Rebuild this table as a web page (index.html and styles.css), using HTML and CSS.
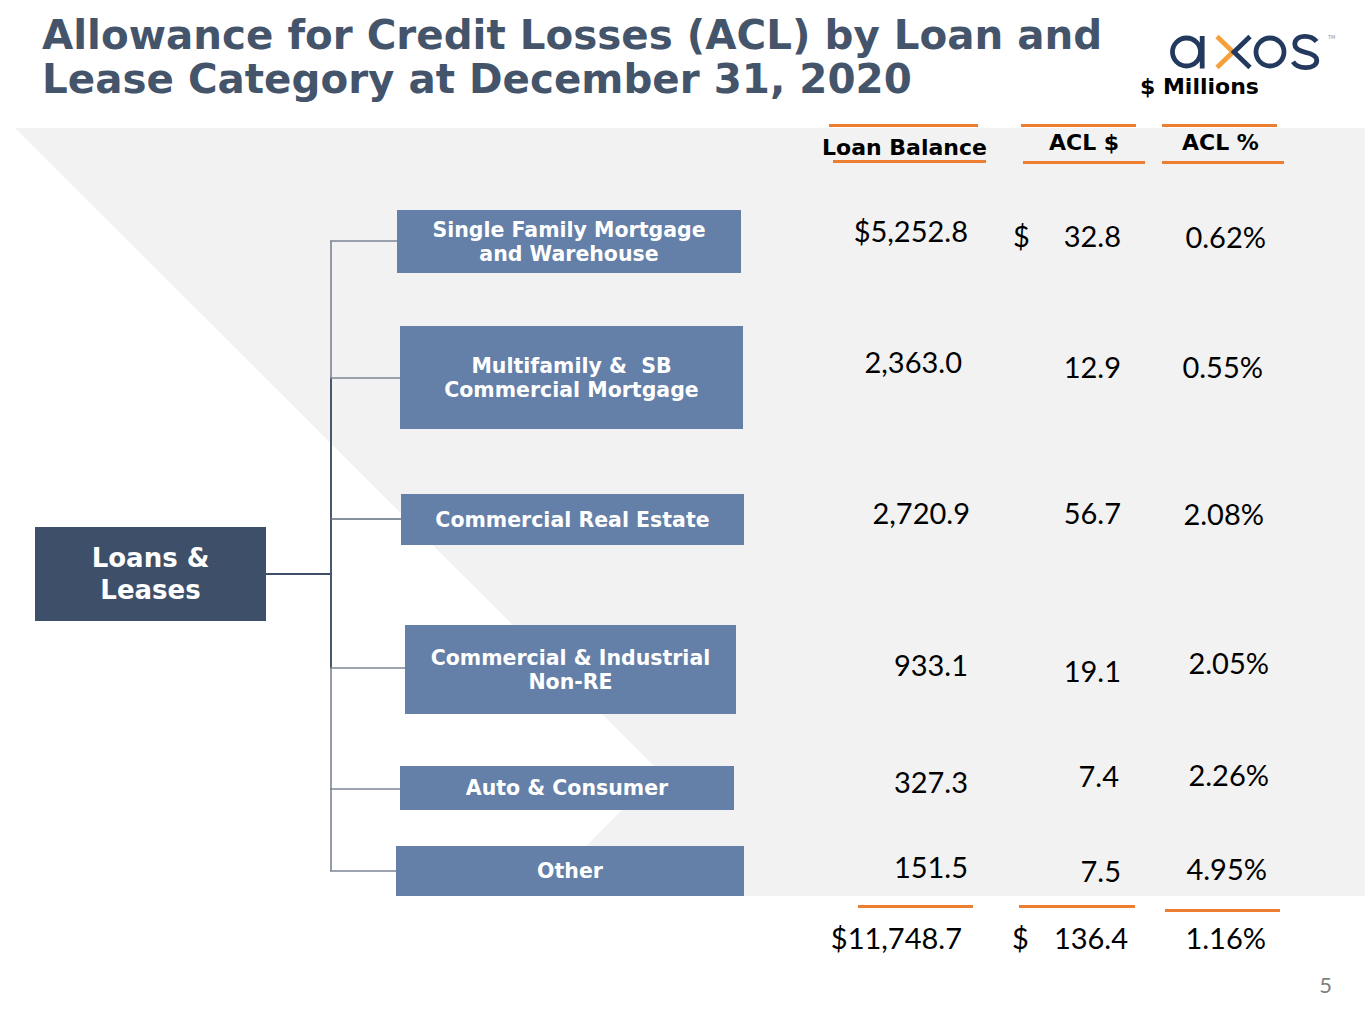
FILE: index.html
```html
<!DOCTYPE html>
<html lang="en">
<head>
<meta charset="utf-8">
<title>Allowance for Credit Losses</title>
<link rel="stylesheet" href="styles.css">
</head>
<body>
<div class="slide">
  <header class="top">
    <h1 class="title">Allowance for Credit Losses (ACL) by Loan and<br>Lease Category at December 31, 2020</h1>
    <div class="brand">
      <svg class="logo" width="178" height="46" viewBox="0 0 178 46" aria-label="axos">
        <g fill="none" stroke-width="4.8">
          <circle cx="18.5" cy="24" r="14" stroke="#233A5E"/>
          <line x1="34.2" y1="8" x2="34.2" y2="40.5" stroke="#233A5E"/>
          <polyline points="49,8.5 65,24 49,39.5" stroke="#F4A13A"/>
          <polyline points="82,8.5 66,24 82,39.5" stroke="#233A5E"/>
          <circle cx="102" cy="24" r="14" stroke="#233A5E"/>
          <path d="M148.5,13.5 C145.5,9.5 141,8.3 137,8.3 C130.5,8.3 126.8,11.8 126.8,16.3 C126.8,21.3 131.5,23 137.5,24.3 C144,25.7 148.8,28 148.8,32.3 C148.8,37 144,39.7 137.5,39.7 C132,39.7 127.5,37.7 125,33.8" stroke="#233A5E"/>
        </g>
        <text x="160" y="11" class="tm">TM</text>
      </svg>
      <div class="units">$ Millions</div>
    </div>
  </header>

  <main class="stage">
    <section class="diagram">
      <svg class="wires" width="800" height="778" viewBox="0 0 800 778">
        <g fill="none">
          <line x1="266" y1="456" x2="332" y2="456" stroke="#3E5069" stroke-width="2"/>
          <line x1="331" y1="123" x2="331" y2="260" stroke="#7C8594" stroke-width="1.6"/>
          <line x1="331" y1="260" x2="331" y2="550" stroke="#4A586C" stroke-width="2"/>
          <line x1="331" y1="550" x2="331" y2="753" stroke="#7C8594" stroke-width="1.6"/>
          <line x1="330" y1="123" x2="397" y2="123" stroke="#7C8594" stroke-width="1.6"/>
          <line x1="330" y1="260" x2="400" y2="260" stroke="#7C8594" stroke-width="1.6"/>
          <line x1="330" y1="401" x2="401" y2="401" stroke="#5F6B7D" stroke-width="1.6"/>
          <line x1="330" y1="550" x2="405" y2="550" stroke="#7C8594" stroke-width="1.6"/>
          <line x1="330" y1="671" x2="400" y2="671" stroke="#7C8594" stroke-width="1.6"/>
          <line x1="330" y1="753" x2="396" y2="753" stroke="#7C8594" stroke-width="1.6"/>
        </g>
      </svg>
      <div class="node root">Loans &amp;<br>Leases</div>
      <div class="node cat n1">Single Family Mortgage<br>and Warehouse</div>
      <div class="node cat n2">Multifamily &amp;&nbsp; SB<br>Commercial Mortgage</div>
      <div class="node cat n3">Commercial Real Estate</div>
      <div class="node cat n4">Commercial &amp; Industrial<br>Non-RE</div>
      <div class="node cat n5">Auto &amp; Consumer</div>
      <div class="node cat n6">Other</div>
    </section>

    <section class="figures">
      <div class="frow hdr">
        <div class="hcell">
          <div class="rule r-lb-top"></div>
          <div class="hlabel l-lb">Loan Balance</div>
          <div class="rule r-lb-bot"></div>
        </div>
        <div class="hcell">
          <div class="rule r-acl-top"></div>
          <div class="hlabel l-acl">ACL $</div>
          <div class="rule r-acl-bot"></div>
        </div>
        <div class="hcell">
          <div class="rule r-pct-top"></div>
          <div class="hlabel l-pct">ACL %</div>
          <div class="rule r-pct-bot"></div>
        </div>
      </div>

      <div class="frow data row1">
        <div class="fc c1">$5,252.8</div>
        <div class="fc c2 dn5"><span class="cur">$</span><span>32.8</span></div>
        <div class="fc c3 dn6">0.62%</div>
      </div>
      <div class="frow data row2">
        <div class="fc c1 in6">2,363.0</div>
        <div class="fc c2 dn5"><span>12.9</span></div>
        <div class="fc c3 dn5 in3">0.55%</div>
      </div>
      <div class="frow data row3">
        <div class="fc c1 out2">2,720.9</div>
        <div class="fc c2"><span>56.7</span></div>
        <div class="fc c3 dn1 in2">2.08%</div>
      </div>
      <div class="frow data row4">
        <div class="fc c1">933.1</div>
        <div class="fc c2 dn6"><span>19.1</span></div>
        <div class="fc c3 up2 out3">2.05%</div>
      </div>
      <div class="frow data row5">
        <div class="fc c1">327.3</div>
        <div class="fc c2 up6 in2"><span>7.4</span></div>
        <div class="fc c3 up7 out3">2.26%</div>
      </div>
      <div class="frow data row6">
        <div class="fc c1">151.5</div>
        <div class="fc c2 dn4"><span>7.5</span></div>
        <div class="fc c3 dn2 out1">4.95%</div>
      </div>
      <div class="frow total">
        <div class="tcell">
          <div class="rule r-t1"></div>
          <div class="fc c1 in6 t-text">$11,748.7</div>
        </div>
        <div class="tcell">
          <div class="rule r-t2"></div>
          <div class="fc c2 c2-total t-text"><span class="cur">$</span><span>136.4</span></div>
        </div>
        <div class="tcell">
          <div class="rule r-t3"></div>
          <div class="fc c3 t-text3">1.16%</div>
        </div>
      </div>
    </section>
  </main>

  <footer class="pageno">5</footer>
</div>
</body>
</html>
```

FILE: styles.css
```css
* { box-sizing: border-box; }

html, body {
  margin: 0;
  padding: 0;
  background: #ffffff;
}

body {
  font-family: "DejaVu Sans", Verdana, sans-serif;
}

.slide {
  position: relative;
  z-index: 0;
  width: 1365px;
  height: 1024px;
  overflow: hidden;
  background: #ffffff;
}

/* grey chevron backdrop */
.slide::before {
  content: "";
  position: absolute;
  z-index: -1;
  left: 0;
  top: 128px;
  width: 1365px;
  height: 768px;
  background: #F2F2F2;
  clip-path: polygon(15px 0, 1365px 0, 1365px 768px, 536px 768px, 660px 644px);
}

/* ---------- header ---------- */
.top {
  display: flex;
  height: 118px;
}

.title {
  margin: 0;
  padding: 13px 0 0 42px;
  font-family: "DejaVu Sans", Verdana, sans-serif;
  font-weight: bold;
  font-size: 40.4px;
  line-height: 44px;
  color: #44546A;
  white-space: nowrap;
}

.brand {
  margin-left: auto;
  width: 225px;
  padding-top: 28px;
  display: flex;
  flex-direction: column;
  align-items: flex-start;
}

.logo {
  display: block;
  margin-left: 28px;
}

.tm {
  font-family: "DejaVu Sans", sans-serif;
  font-size: 5px;
  fill: #8A8F99;
}

.units {
  margin-top: 1px;
  font-weight: bold;
  font-size: 22px;
  line-height: 24px;
  color: #000000;
  white-space: nowrap;
}

/* ---------- stage ---------- */
.stage {
  display: flex;
  height: 850px;
}

.diagram {
  position: relative;
  flex: 0 0 800px;
  height: 778px;
}

.wires {
  position: absolute;
  left: 0;
  top: 0;
}

.node {
  position: absolute;
  display: flex;
  align-items: center;
  justify-content: center;
  text-align: center;
  color: #ffffff;
  font-weight: bold;
  white-space: nowrap;
}

.root {
  left: 35px;
  top: 409px;
  width: 231px;
  height: 94px;
  background: #3E5069;
  font-size: 26px;
  line-height: 32px;
}

.cat {
  background: #6480A8;
  font-size: 20.5px;
  line-height: 24px;
}

.n1 { left: 397px; top: 92px;  width: 344px; height: 63px; }
.n2 { left: 400px; top: 208px; width: 343px; height: 103px; }
.n3 { left: 401px; top: 376px; width: 343px; height: 51px; }
.n4 { left: 405px; top: 507px; width: 331px; height: 89px; }
.n5 { left: 400px; top: 648px; width: 334px; height: 44px; }
.n6 { left: 396px; top: 728px; width: 348px; height: 50px; }

/* ---------- figures ---------- */
.figures {
  flex: 0 0 490px;
  display: flex;
  flex-direction: column;
}

.frow {
  display: grid;
  grid-template-columns: 190px 160px 140px;
  align-items: start;
}

.rule {
  height: 3px;
  background: #ED7D31;
}

.hlabel {
  font-family: "DejaVu Sans", Verdana, sans-serif;
  font-weight: bold;
  font-size: 22px;
  line-height: 20px;
  color: #000000;
  white-space: nowrap;
}

.r-lb-top  { margin: 6px 0 0 29px; width: 149px; }
.l-lb      { margin: 11px 0 0 22px; }
.r-lb-bot  { margin: 2px 0 0 33px; width: 153px; }

.r-acl-top { margin: 6px 0 0 31px; width: 115px; }
.l-acl     { margin: 6px 0 0 59px; }
.r-acl-bot { margin: 8px 0 0 33px; width: 122px; }

.r-pct-top { margin: 6px 0 0 12px; width: 115px; }
.l-pct     { margin: 6px 0 0 32px; }
.r-pct-bot { margin: 8px 0 0 12px; width: 122px; }

.fc {
  font-family: Lato, "Open Sans", sans-serif;
  font-size: 29px;
  line-height: 30px;
  color: #000000;
  white-space: nowrap;
}

.c1 { text-align: right; padding-right: 22px; }
.c2 { display: flex; justify-content: flex-end; padding: 0 29px 0 23px; }
.c3 { text-align: right; padding-right: 24px; }
.cur { margin-right: auto; }

.row1 { margin-top: 52px; height: 131px; }
.row2 { height: 151px; }
.row3 { height: 152px; }
.row4 { height: 117px; }
.row5 { height: 85px; }
.row6 { height: 53px; }

/* small vertical nudges, as on the slide */
.dn1 { margin-top: 1px; }
.dn2 { margin-top: 2px; }
.dn4 { margin-top: 4px; }
.dn5 { margin-top: 5px; }
.dn6 { margin-top: 6px; }
.up2 { margin-top: -2px; }
.up6 { margin-top: -6px; }
.up7 { margin-top: -7px; }

/* small horizontal nudges */
.c1.in6  { padding-right: 28px; }
.c1.out2 { padding-right: 20px; }
.c2.in2  { padding-right: 31px; }
.c3.in3  { padding-right: 27px; }
.c3.in2  { padding-right: 26px; }
.c3.out3 { padding-right: 21px; }
.c3.out1 { padding-right: 23px; }

/* totals */
.r-t1 { margin: 0 0 0 58px; width: 115px; }
.r-t2 { margin: 0 0 0 29px; width: 116px; }
.r-t3 { margin: 4px 0 0 15px; width: 115px; }
.t-text  { margin-top: 15px; }
.t-text3 { margin-top: 11px; }
.c2.c2-total { padding: 0 22px 0 22px; }

/* ---------- footer ---------- */
.pageno {
  padding: 5px 33px 0 0;
  text-align: right;
  font-family: Lato, "Open Sans", sans-serif;
  font-size: 22px;
  line-height: 24px;
  color: #7F7F7F;
}
```
